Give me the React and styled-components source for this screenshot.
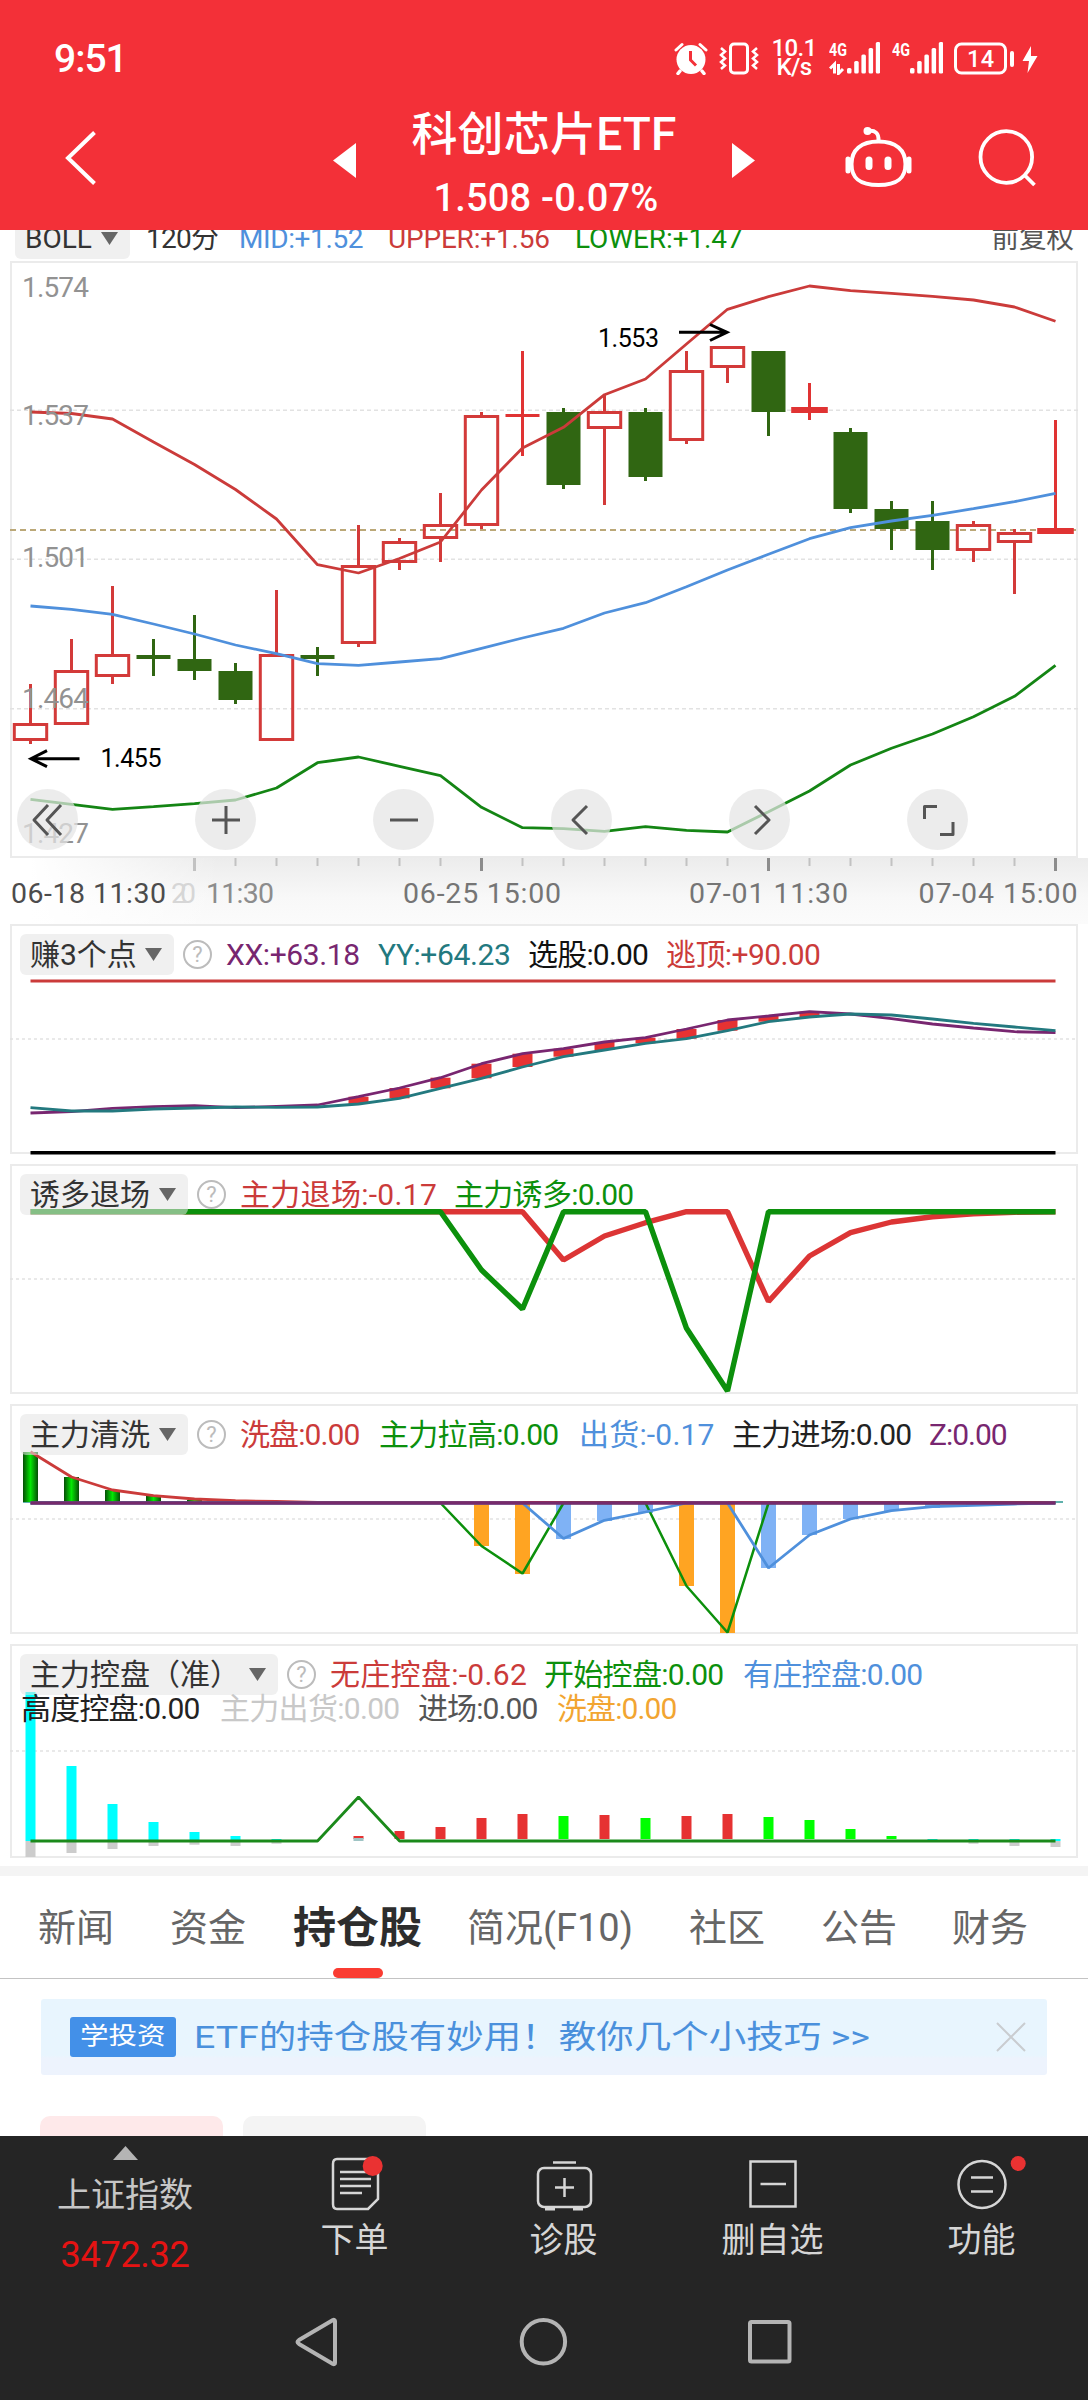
import styled, { createGlobalStyle } from 'styled-components';

const GlobalStyle = createGlobalStyle`
	* {
		box-sizing: border-box;
	}

	body {
		margin: 0;
		background: #fff;
		font-family: Roboto, 'Noto Sans CJK SC', sans-serif;
	}

	svg {
		display: block;
		flex: none;
	}

	svg text {
		font-family: Roboto, 'Noto Sans CJK SC', sans-serif;
	}
`;

const RED = '#cb3b3a';
const GREEN = '#0c900c';
const BLUE = '#4f90dc';
const PURPLE = '#782670';
const TEAL = '#23797f';
const BODY_GREEN = '#306612';

const Screen = styled.div`
	display: flex;
	flex-direction: column;
	width: 1088px;
	height: 2400px;
	background: #fff;
	overflow: hidden;
`;

/* ---------- header ---------- */

const Header = styled.header`
	display: flex;
	flex-direction: column;
	height: 230px;
	flex: none;
	background: #f33038;
	color: #fff;
	z-index: 2;
`;

const StatusBar = styled.div`
	display: flex;
	justify-content: space-between;
	height: 92px;
	padding: 25px 50px 0 54px;
`;

const Clock = styled.div`
	font-size: 39px;
	font-weight: 500;
	line-height: 68px;
	letter-spacing: -1px;
`;

const StatusIcons = styled.div`
	display: flex;
	align-items: center;
	height: 66px;
`;

const Speed = styled.div`
	display: flex;
	flex-direction: column;
	align-items: center;
	width: 44px;
	margin: 0 13px;
	font-size: 24px;
	font-weight: 500;
	line-height: 19px;
	letter-spacing: -0.6px;
`;

const TitleBar = styled.div`
	display: grid;
	grid-template-columns: 333px 23px 376px 23px 1fr;
	height: 138px;
`;

const BackCell = styled.div`
	padding: 38px 0 0 64px;
`;

const StepCell = styled.div`
	padding-top: 51px;
`;

const TitleCell = styled.div`
	display: flex;
	flex-direction: column;
	align-items: center;
	padding-top: 11px;
`;

const Title = styled.div`
	font-size: 46px;
	line-height: 62px;
	white-space: nowrap;
	font-weight: 500;
	letter-spacing: 0.2px;
`;

const Quote = styled.div`
	margin-top: 10px;
	padding-left: 4px;
	font-size: 38px;
	font-weight: 500;
	line-height: 46px;
	letter-spacing: 0.2px;
`;

const ActionCell = styled.div`
	display: flex;
	gap: 66px;
	padding: 34px 0 0 89px;
`;

/* ---------- charts ---------- */

const InfoRow = styled.div`
	display: flex;
	align-items: flex-end;
	height: 31px;
	flex: none;
	padding: 0 14px 2px 15px;
	overflow: hidden;
`;

const Pill = styled.div`
	display: flex;
	align-items: center;
	justify-content: space-between;
	flex: none;
	width: ${(p) => p.$w}px;
	height: 41px;
	margin-right: ${(p) => p.$mr || 0}px;
	padding: 0 12px 0 10px;
	border-radius: 6px;
	background: rgba(229, 229, 229, 0.56);
	color: #333;
	font-size: ${(p) => p.$size || 30}px;
	line-height: 41px;
	white-space: nowrap;
`;

const Label = styled.span`
	flex: none;
	width: ${(p) => (p.$w ? `${p.$w}px` : 'auto')};
	margin-left: ${(p) => (p.$end ? 'auto' : 0)};
	color: ${(p) => p.$c};
	font-size: ${(p) => p.$size || 30}px;
	line-height: 41px;
	letter-spacing: ${(p) => p.$ls || 0}px;
	white-space: nowrap;
`;

const Frame = styled.section`
	position: relative;
	flex: none;
	width: 1068px;
	height: ${(p) => p.$h}px;
	margin: 0 0 ${(p) => p.$gap || 0}px 10px;
	border: 2px solid #ebebeb;

	> svg {
		margin: -2px;
		overflow: visible;
	}
`;

const ZoomButtons = styled.div`
	position: absolute;
	left: 5px;
	top: 526px;
	display: flex;
	gap: 117px;
`;

const RoundButton = styled.div`
	display: flex;
	align-items: center;
	justify-content: center;
	width: 61px;
	height: 61px;
	border-radius: 50%;
	background: rgba(228, 228, 228, 0.72);
`;

const Axis = styled.div`
	height: 66px;
	flex: none;
	background: linear-gradient(90deg, #fff 30px, rgba(255, 255, 255, 0) 220px),
		linear-gradient(180deg, #ececec, #f8f8f8 60%, #fbfbfb);
`;

const Legend = styled.div`
	position: absolute;
	left: 8px;
	top: 8px;
	display: flex;
	align-items: center;
`;

const LegendWrap = styled.div`
	position: absolute;
	left: 9px;
	top: 42px;
	display: flex;
`;

const HelpIcon = styled.div`
	display: flex;
	align-items: center;
	justify-content: center;
	width: 29px;
	height: 29px;
	margin: 0 14px 0 9px;
	border: 2px solid #bcbcbc;
	border-radius: 50%;
	color: #bcbcbc;
	font-size: 22px;
	line-height: 25px;
`;

/* ---------- lower content ---------- */

const Divider = styled.div`
	height: 10px;
	flex: none;
	margin-top: 8px;
	background: #f4f4f4;
`;

const Tabs = styled.nav`
	display: flex;
	flex: none;
	height: 103px;
	padding-left: 38px;
	border-bottom: 1px solid #c3c3c3;
`;

const Tab = styled.div`
	position: relative;
	width: ${(p) => p.$w}px;
	color: ${(p) => (p.$active ? '#2d2d2d' : '#666')};
	font-size: ${(p) => (p.$active ? 43 : 38)}px;
	font-weight: ${(p) => (p.$active ? 700 : 400)};
	line-height: 105px;
	white-space: nowrap;

	&::after {
		content: '';
		display: ${(p) => (p.$active ? 'block' : 'none')};
		position: absolute;
		left: 40px;
		bottom: 0;
		width: 50px;
		height: 10px;
		border-radius: 5px;
		background: #fa3c32;
	}
`;

const Banner = styled.div`
	display: flex;
	align-items: center;
	flex: none;
	width: 1006px;
	height: 76px;
	margin: 20px 0 0 41px;
	padding: 0 21px 0 29px;
	border-radius: 3px;
	background: linear-gradient(180deg, #e8f5fe 74%, #edf3fd 78%);
`;

const Badge = styled.div`
	width: 106px;
	height: 40px;
	margin-right: 18px;
	border-radius: 3px;
	background: #4390e8;
	color: #fff;
	font-size: 24px;
	line-height: 38px;

	span {
		display: block;
		margin-left: 10px;
		width: 72px;
		transform: scaleX(1.19);
		transform-origin: left;
		white-space: nowrap;
	}
`;

const BannerText = styled.div`
	flex: 1;
	color: #4a90dc;
	font-size: 32px;
	line-height: 76px;
	white-space: nowrap;
	transform: scaleX(1.172);
	transform-origin: left;
`;

const Chips = styled.div`
	display: flex;
	gap: 20px;
	flex: none;
	height: 20px;
	margin: 41px 0 0 40px;
`;

const Chip = styled.div`
	width: 183px;
	border-radius: 10px 10px 0 0;
	background: ${(p) => p.$bg};
`;

/* ---------- bottom bars ---------- */

const BottomBar = styled.footer`
	display: grid;
	grid-template-columns: 250px repeat(4, 209px);
	flex: none;
	height: 154px;
	background: #252525;
`;

const IndexCell = styled.div`
	display: flex;
	flex-direction: column;
	align-items: center;
	padding-top: 10px;
	color: #c6c6c6;
	font-size: 34px;

	div {
		line-height: 44px;
		margin-top: 13px;
	}

	strong {
		margin-top: 16px;
		color: #e51313;
		font-size: 36px;
		font-weight: 400;
		line-height: 44px;
		letter-spacing: -0.3px;
	}
`;

const BarItem = styled.div`
	display: flex;
	flex-direction: column;
	align-items: center;
	padding-top: 18px;
	color: #d6d6d6;
	font-size: 34px;
	line-height: 44px;

	svg {
		overflow: visible;
		margin-bottom: 4px;
	}
`;

const SystemNav = styled.div`
	display: flex;
	flex: 1;
	align-items: flex-start;
	padding: 25px 0 0 293px;
	background: #252525;
`;

const NavIcon = styled.svg`
	width: 50px;
	height: 54px;
	margin-right: ${(p) => p.$mr || 0}px;
	fill: none;
	stroke: #b4b4b4;
	stroke-width: 4;
	stroke-linejoin: round;
`;

/* ---------- data ---------- */

// horizontal centre of the n-th bar; every pane shares this scale
const bx = (i) => 30.5 + i * 41;

// [kind, body top, body bottom, wick top, wick bottom]
const candles = [
	['up', 723, 741, 684, 744],
	['up', 670, 725, 639, 725],
	['up', 654, 677, 586, 684],
	['down', 655, 659, 639, 676],
	['down', 659, 671, 615, 680],
	['down', 671, 700, 663, 704],
	['up', 654, 741, 590, 741],
	['down', 655, 659, 647, 676],
	['up', 565, 644, 525, 647],
	['up', 541, 563, 538, 570],
	['up', 524, 539, 493, 562],
	['up', 415, 526, 412, 529],
	['flat', 414, 417, 351, 456],
	['down', 412, 485, 408, 489],
	['up', 411, 429, 395, 505],
	['down', 412, 477, 408, 481],
	['up', 370, 441, 351, 444],
	['up', 346, 368, 346, 383],
	['down', 351, 412, 351, 436],
	['flat', 407, 413, 383, 420],
	['down', 432, 509, 428, 513],
	['down', 509, 529, 501, 550],
	['down', 521, 550, 501, 570],
	['up', 524, 551, 521, 562],
	['up', 532, 543, 529, 594],
	['flat', 528, 534, 420, 534],
];

const upper = [
	412, 413.5, 419, 442, 464.5, 489.5, 519, 564.7, 573, 558.5, 542, 490, 448,
	427.3, 394.7, 379, 344, 309.3, 296.7, 286, 290.7, 293.3, 296.3, 300, 307, 321.3,
];
const mid = [
	606, 609.3, 614.3, 624, 634, 645, 653.7, 663.7, 665.3, 662, 658.7, 648.3, 638,
	628.3, 613, 602.7, 586.7, 570, 554.3, 538.7, 527.7, 521, 515.3, 508.7, 501.7, 493.3,
];
const lower = [
	799.3, 804.3, 809.3, 806.7, 803.7, 800, 788, 762.7, 757, 766.3, 775.7, 807.3,
	827.7, 828.7, 831.3, 826.7, 830.3, 832, 811.7, 791, 765, 748.3, 734, 716.7,
	696.3, 665.3,
];

const xx = [
	1113, 1111.7, 1108.3, 1106.7, 1105.7, 1107.7, 1106.3, 1105, 1096.7, 1088,
	1077.7, 1063.7, 1053.7, 1048.7, 1042, 1037.7, 1029, 1020, 1016, 1011.7, 1014,
	1018.7, 1024, 1028, 1031.7, 1032.7,
];
const yy = [
	1107.7, 1111, 1111, 1109, 1108, 1107, 1107.3, 1107, 1104, 1098.3, 1088.3,
	1078.3, 1067, 1056.7, 1050, 1043.3, 1038.7, 1030.7, 1021.7, 1017, 1014, 1015,
	1019, 1023.3, 1027, 1030.7,
];

// series that rest on a base line, with only the exceptions listed
const series = (base, points) =>
	Array.from({ length: 26 }, (_, i) => (i in points ? points[i] : base));

const exitRed = series(1211.7, {
	13: 1260, 14: 1236, 15: 1222.7, 18: 1301.5, 19: 1256, 20: 1232.7, 21: 1222,
	22: 1216.7, 23: 1213.7, 24: 1212.2,
});
const lureGreen = series(1211.7, { 11: 1270, 12: 1309, 16: 1328.3, 17: 1391 });

const washRed = series(1502.5, {
	0: 1451.7, 1: 1477, 2: 1490, 3: 1495.7, 4: 1499, 5: 1500.7, 6: 1501.5,
});
const pullGreen = series(1503, { 11: 1546, 12: 1573.5, 16: 1586, 17: 1632.5 });
const sellBlue = series(1503, {
	13: 1538.5, 14: 1520.3, 15: 1512, 18: 1568, 19: 1535, 20: 1519, 21: 1510.7,
	22: 1506.7, 23: 1505.3, 24: 1504,
});

const washBars = { 0: 1452, 1: 1477, 2: 1490, 3: 1496, 4: 1500 };
const orangeBars = { 11: 1546, 12: 1574, 16: 1586, 17: 1633 };
const blueBars = {
	13: 1539, 14: 1521, 15: 1513, 18: 1568, 19: 1535, 20: 1519, 21: 1511,
	22: 1508, 23: 1506,
};

const cyanBars = {
	0: 1692, 1: 1766, 2: 1804, 3: 1822, 4: 1832, 5: 1836, 6: 1839, 22: 1839,
	23: 1839, 24: 1839, 25: 1839,
};
const greyBars = {
	0: 1857, 1: 1853, 2: 1849, 3: 1846, 4: 1844.7, 5: 1846, 6: 1843.7, 23: 1843.7,
	24: 1846, 25: 1847,
};
const redBars = {
	8: 1836, 9: 1831, 10: 1827, 11: 1818, 12: 1814, 14: 1815, 16: 1816, 17: 1814,
};
const limeBars = { 13: 1816, 15: 1818, 18: 1817, 19: 1820, 20: 1829, 21: 1836 };

/* ---------- chart parts ---------- */

const Line = ({ data, color, width = 2.8 }) => (
	<polyline
		points={data.map((y, i) => `${bx(i)},${y}`).join(' ')}
		fill="none"
		stroke={color}
		strokeWidth={width}
		strokeLinejoin="bevel"
	/>
);

const Bars = ({ data, base, width, color }) =>
	Object.entries(data).map(([i, y]) => (
		<rect
			key={i}
			x={bx(+i) - width / 2}
			y={Math.min(y, base)}
			width={width}
			height={Math.abs(base - y)}
			fill={color}
		/>
	));

const Candle = ({ i, kind, top, bottom, high, low }) => {
	const x = bx(i);
	const color = kind === 'down' ? BODY_GREEN : kind === 'up' ? '#d33a39' : '#e03333';
	if (kind === 'up') {
		return (
			<g stroke={color} strokeWidth="3" fill="none">
				<path d={`M${x} ${high}V${top}M${x} ${bottom}V${low}`} />
				<rect x={x - 16.2} y={top + 1.5} width="32.4" height={bottom - top - 3} />
			</g>
		);
	}
	const half = kind === 'flat' && bottom - top > 4 ? 18.3 : 17;
	return (
		<g fill={color}>
			<rect x={x - 1.5} y={high} width="3" height={low - high} />
			<rect x={x - half} y={top} width={half * 2} height={bottom - top} />
		</g>
	);
};

const GridLine = ({ y, dash = '4 3' }) => (
	<path d={`M10 ${y}H1078`} stroke="#e2e2e2" strokeWidth="1.4" strokeDasharray={dash} />
);

const PRICES = [
	['1.574', 296.7],
	['1.537', 424.5],
	['1.501', 566.7],
	['1.464', 707.7],
	['1.427', 842.7],
];

const TriangleDown = () => (
	<svg width="17" height="13" viewBox="0 0 17 13">
		<path d="M0 0H17L8.5 13Z" fill="#666" />
	</svg>
);

const PriceChart = () => (
	<Frame $h={597}>
		<svg width="1068" height="597" viewBox="10 261 1068 597">
			<GridLine y={410.3} />
			<GridLine y={559.3} />
			<GridLine y={708.7} />
			<path d="M10 530H1078" stroke="#bba878" strokeWidth="2" strokeDasharray="6 4" />
			{candles.map(([kind, top, bottom, high, low], i) => (
				<Candle key={i} {...{ i, kind, top, bottom, high, low }} />
			))}
			<Line data={upper} color={RED} />
			<Line data={mid} color={BLUE} />
			<Line data={lower} color="#148514" />
			<g fontSize="28" fill="#929292">
				{PRICES.map(([label, y]) => (
					<text key={label} x="22" y={y} textLength="67">
						{label}
					</text>
				))}
			</g>
			<g stroke="#000" strokeWidth="3" fill="none">
				<path d="M679 332.3H727M710 324.5L727 332.3L710 340.5" />
				<path d="M79.5 758.7H32M47 750.7L31 758.7L47 766.7" />
			</g>
			<g fontSize="25" fill="#000">
				<text x="598" y="346.7" textLength="61">
					1.553
				</text>
				<text x="100.5" y="767" textLength="61">
					1.455
				</text>
			</g>
		</svg>
		<ZoomButtons>
			{[
				'M31 16L17 31L31 46M44 16L30 31L44 46',
				'M17 31H45M31 17V45',
				'M17 31H45',
				'M36 17L22 31L36 45',
				'M26 17L40 31L26 45',
				'M17.5 30V17.5H30M46 33V45.5H33',
			].map((d) => (
				<RoundButton key={d}>
					<svg width="61" height="61" viewBox="0 0 61 61">
						<path d={d} fill="none" stroke="#555" strokeWidth="3" strokeLinejoin="round" />
					</svg>
				</RoundButton>
			))}
		</ZoomButtons>
	</Frame>
);

const TimeAxis = () => (
	<Axis>
		<svg width="1088" height="66" viewBox="0 858 1088 66">
			{Array.from({ length: 22 }, (_, n) => n + 4).map((i) => {
				const major = [4, 11, 18, 25].includes(i);
				return (
					<rect
						key={i}
						x={bx(i) - (major ? 1.5 : 1)}
						y="858"
						width={major ? 3 : 2}
						height={major ? 13 : 8}
						fill={major && i > 4 ? '#8c8c8c' : '#c2c2c2'}
					/>
				);
			})}
			<g fontSize="28.5" fill="#757575">
				<text x="171" y="902.7" fill="#d6d6d6" textLength="25">
					20
				</text>
				<text x="206" y="902.7" fill="#8c8c8c" textLength="68">
					11:30
				</text>
				<text x="403" y="902.7" textLength="158">
					06-25 15:00
				</text>
				<text x="689" y="902.7" textLength="159">
					07-01 11:30
				</text>
				<text x="918.5" y="902.7" textLength="159">
					07-04 15:00
				</text>
				<text x="11" y="902.7" fill="#4c4c4c" textLength="155">
					06-18 11:30
				</text>
			</g>
		</svg>
	</Axis>
);

const LegendRow = ({ name, pill, items }) => (
	<Legend>
		<Pill $w={pill}>
			{name}
			<TriangleDown />
		</Pill>
		<HelpIcon>?</HelpIcon>
		{items.map(([text, color, w, ls]) => (
			<Label key={text} $c={color} $w={w} $ls={ls}>
				{text}
			</Label>
		))}
	</Legend>
);

const ThreePointPane = () => (
	<Frame $h={230} $gap={10}>
		<svg width="1068" height="230" viewBox="10 924 1068 230">
			<GridLine y={1039} dash="3 3" />
			{xx.map((y, i) =>
				i > 7 && i < 20 ? (
					<rect key={i} x={bx(i) - 10} y={y} width="20" height={yy[i] - y} fill="#e63232" />
				) : null
			)}
			<Line data={xx} color={PURPLE} />
			<Line data={yy} color={TEAL} />
			<path d="M30.5 981H1055.5" stroke={RED} strokeWidth="3" />
			<path d="M30.5 1152.7H1055.5" stroke="#000" strokeWidth="3.5" />
		</svg>
		<LegendRow
			name="赚3个点"
			pill={154}
			items={[
				['XX:+63.18', PURPLE, 152, -0.4],
				['YY:+64.23', TEAL, 150, -0.4],
				['选股:0.00', '#111', 138, -0.8],
				['逃顶:+90.00', RED, 160, -0.6],
			]}
		/>
	</Frame>
);

const ExitPane = () => (
	<Frame $h={230} $gap={10}>
		<svg width="1068" height="230" viewBox="10 1164 1068 230">
			<GridLine y={1279} dash="3 3" />
			<Line data={exitRed} color="#dc3535" width={5.4} />
			<Line data={lureGreen} color={GREEN} width={5.4} />
		</svg>
		<LegendRow
			name="诱多退场"
			pill={168}
			items={[
				['主力退场:-0.17', RED, 214, 0.3],
				['主力诱多:0.00', GREEN, 200, -0.7],
			]}
		/>
	</Frame>
);

const WashPane = () => (
	<Frame $h={230} $gap={10}>
		<svg width="1068" height="230" viewBox="10 1404 1068 230">
			<defs>
				<linearGradient id="wash">
					<stop offset="0" stopColor="#064d06" />
					<stop offset="0.5" stopColor="#04e804" />
					<stop offset="1" stopColor="#064d06" />
				</linearGradient>
			</defs>
			<GridLine y={1519} dash="3 3" />
			<path d="M23 1502H1063" stroke="#5fb0ac" strokeWidth="2" />
			<Bars data={washBars} base={1502} width={15} color="url(#wash)" />
			<Bars data={orangeBars} base={1503} width={15} color="#ffa422" />
			<Bars data={blueBars} base={1503} width={15} color="#7fb2f5" />
			<Line data={washRed} color={RED} />
			<Line data={pullGreen} color={GREEN} width={2.5} />
			<Line data={sellBlue} color={BLUE} />
			<path d="M30.5 1503H1055.5" stroke="#762a6c" strokeWidth="3.6" />
		</svg>
		<LegendRow
			name="主力清洗"
			pill={168}
			items={[
				['洗盘:0.00', RED, 139, -0.9],
				['主力拉高:0.00', GREEN, 200, -0.7],
				['出货:-0.17', BLUE, 153, 0.2],
				['主力进场:0.00', '#222', 197, -0.7],
				['Z:0.00', PURPLE, 80, -1],
			]}
		/>
	</Frame>
);

const ControlPane = () => (
	<Frame $h={214}>
		<svg width="1068" height="214" viewBox="10 1644 1068 214">
			<GridLine y={1751} dash="3 3" />
			<Bars data={greyBars} base={1841} width={10} color="#ccc" />
			<Bars data={cyanBars} base={1841} width={10} color="#00ffff" />
			<Bars data={redBars} base={1839} width={10} color="#e63232" />
			<Bars data={limeBars} base={1839} width={10} color="#00ff00" />
			<rect x={bx(8) - 5} y="1838" width="10" height="3" fill="#9fc4c4" />
			<Line data={series(1841, { 8: 1797 })} color="#1b8a1b" />
		</svg>
		<LegendRow
			name="主力控盘（准）"
			pill={258}
			items={[
				['无庄控盘:-0.62', RED, 214, 0.3],
				['开始控盘:0.00', GREEN, 199, -0.7],
				['有庄控盘:0.00', BLUE, 190, -0.7],
			]}
		/>
		<LegendWrap>
			<Label $c="#222" $w={199} $ls={-0.8}>高度控盘:0.00</Label>
			<Label $c="#c8c8c8" $w={198} $ls={-0.7}>主力出货:0.00</Label>
			<Label $c="#555" $w={139} $ls={-0.9}>进场:0.00</Label>
			<Label $c="#f2a531" $w={130} $ls={-0.9}>洗盘:0.00</Label>
		</LegendWrap>
	</Frame>
);

/* ---------- icons ---------- */

const AlarmIcon = () => (
	<svg width="34" height="33" viewBox="0 0 34 33">
		<circle cx="17" cy="17.5" r="14.5" fill="#fff" />
		<path d="M2 8L8 2.5M32 8L26 2.5" stroke="#fff" strokeWidth="3" strokeLinecap="round" />
		<path d="M6 29L4 31.5M28 29L30 31.5" stroke="#fff" strokeWidth="3.5" strokeLinecap="round" />
		<path d="M16.5 9V18L22 23.5" stroke="#f33038" strokeWidth="3" fill="none" />
	</svg>
);

const VibrateIcon = () => (
	<svg width="40" height="33" viewBox="0 0 40 33" fill="none" stroke="#fff" strokeWidth="3">
		<rect x="11.5" y="2" width="17" height="29" rx="3.5" />
		<path d="M2 6L6 9.5L2 13L6 16.5L2 20L6 23.5L2 27" strokeWidth="2.5" />
		<path d="M38 6L34 9.5L38 13L34 16.5L38 20L34 23.5L38 27" strokeWidth="2.5" />
	</svg>
);

const SignalIcon = ({ arrows }) => (
	<svg width="51" height="33" viewBox="0 0 51 33" fill="#fff">
		<text x="0" y="13.5" fontSize="18.5" fontWeight="700" textLength="18" lengthAdjust="spacingAndGlyphs">
			4G
		</text>
		{[26, 19, 12.5, 6, 0].map((y, n) => (
			<rect key={y} x={18 + n * 7.2} y={y} width="4.5" height={31.5 - y} rx="1.5" />
		))}
		{arrows && (
			<path
				d="M1 26.5L5.5 22V31.5M9.5 22V31.5L14 27"
				fill="none"
				stroke="#fff"
				strokeWidth="3"
			/>
		)}
	</svg>
);

const BatteryIcon = () => (
	<svg width="84" height="33" viewBox="0 0 84 33">
		<rect x="1.5" y="2" width="50" height="29" rx="6" fill="none" stroke="#fff" strokeWidth="3" />
		<rect x="56" y="9" width="4" height="16" rx="2" fill="#fff" />
		<text x="13" y="25" fontSize="23.5" fontWeight="500" fill="#fff" textLength="27">
			14
		</text>
		<path d="M77 4L68.5 19H75L73.5 31L83.5 14H77Z" fill="#fff" />
	</svg>
);

const RobotIcon = () => (
	<svg width="68" height="64" viewBox="844 128 68 64" fill="none" stroke="#fff" strokeWidth="4">
		<path d="M878.5 143.5C896 143.5 905.5 152 905.5 166C905.5 180 898 187 878.5 187S851.5 180 851.5 166C851.5 152 861 143.5 878.5 143.5Z" />
		<path d="M848 161V173M909 161V173" strokeWidth="5" strokeLinecap="round" />
		<path d="M869 162V168.5M888 162V168.5" strokeWidth="7" strokeLinecap="round" />
		<path d="M868 133C875 132 879 135 878.5 143" />
		<circle cx="867.5" cy="133" r="4" fill="#fff" stroke="none" />
	</svg>
);

const SearchIcon = () => (
	<svg width="60" height="64" viewBox="978 128 60 64" fill="none" stroke="#fff" strokeWidth="3.8">
		<circle cx="1006.3" cy="159" r="25.8" />
		<path d="M1024 176.5L1034.5 187" />
	</svg>
);

const OrderIcon = () => (
	<svg width="50" height="60" viewBox="330 2154 50 60" fill="none" stroke="#d6d6d6" strokeWidth="2.5">
		<path d="M337 2159H373C376 2159 378 2161 378 2164V2199L368 2209H337C334 2209 333 2207 333 2204V2164C333 2161 334 2159 337 2159Z" />
		<path d="M340 2172H371M340 2179H371M340 2186H371M340 2193H362" />
		<circle cx="372.7" cy="2166" r="10" fill="#ea3232" stroke="none" />
	</svg>
);

const DiagnoseIcon = () => (
	<svg width="58" height="60" viewBox="535 2154 58 60" fill="none" stroke="#d6d6d6" strokeWidth="2.5">
		<rect x="538" y="2168" width="53" height="39" rx="6" />
		<path d="M553 2162.5H576M555 2187.5H574M564.5 2178V2197" />
		<path d="M545 2209H555M573 2209H583" strokeWidth="3" />
	</svg>
);

const RemoveIcon = () => (
	<svg width="50" height="60" viewBox="748 2154 50 60" fill="none" stroke="#d6d6d6" strokeWidth="2.5">
		<rect x="750.5" y="2161.5" width="45" height="45" />
		<path d="M760.5 2184H786" />
	</svg>
);

const FunctionIcon = () => (
	<svg width="50" height="60" viewBox="957.5 2154 50 60" fill="none" stroke="#d6d6d6" strokeWidth="2.5">
		<circle cx="982.5" cy="2184.5" r="23.5" />
		<path d="M971.5 2177.5H993.5M971.5 2191.5H993.5" />
		<circle cx="1018.7" cy="2163.5" r="7.5" fill="#ea3232" stroke="none" />
	</svg>
);

const StatusGap = styled.i`
	width: ${(p) => p.$w}px;
`;

const App = () => {
	return (
		<>
			<GlobalStyle />
			<Screen>
				<Header>
					<StatusBar>
						<Clock>9:51</Clock>
						<StatusIcons>
							<AlarmIcon />
							<StatusGap $w={11} />
							<VibrateIcon />
							<Speed>
								<span>10.1</span>
								<span>K/s</span>
							</Speed>
							<SignalIcon arrows />
							<StatusGap $w={12} />
							<SignalIcon />
							<StatusGap $w={11} />
							<BatteryIcon />
						</StatusIcons>
					</StatusBar>
					<TitleBar>
						<BackCell>
							<svg width="34" height="56" viewBox="64 130 34 56">
								<path d="M94.5 132.5L68 158L94.5 183.5" fill="none" stroke="#fff" strokeWidth="4" />
							</svg>
						</BackCell>
						<StepCell>
							<svg width="23" height="35" viewBox="0 0 23 35">
								<path d="M23 0V35L0 17.5Z" fill="#fff" />
							</svg>
						</StepCell>
						<TitleCell>
							<Title>科创芯片ETF</Title>
							<Quote>1.508 -0.07%</Quote>
						</TitleCell>
						<StepCell>
							<svg width="23" height="35" viewBox="0 0 23 35">
								<path d="M0 0V35L23 17.5Z" fill="#fff" />
							</svg>
						</StepCell>
						<ActionCell>
							<RobotIcon />
							<SearchIcon />
						</ActionCell>
					</TitleBar>
				</Header>

				<InfoRow>
					<Pill $w={115} $mr={16} $size={28}>
						BOLL
						<TriangleDown />
					</Pill>
					<Label $c="#333" $w={93} $size={28} $ls={-0.7}>120分</Label>
					<Label $c={BLUE} $w={149} $size={28} $ls={-0.4}>MID:+1.52</Label>
					<Label $c={RED} $w={187} $size={28} $ls={-0.2}>UPPER:+1.56</Label>
					<Label $c={GREEN} $size={28} $ls={-0.1}>LOWER:+1.47</Label>
					<Label $c="#555" $size={27.5} $end>前复权</Label>
				</InfoRow>
				<PriceChart />
				<TimeAxis />
				<ThreePointPane />
				<ExitPane />
				<WashPane />
				<ControlPane />

				<Divider />
				<Tabs>
					<Tab $w={132}>新闻</Tab>
					<Tab $w={123}>资金</Tab>
					<Tab $w={174} $active>
						持仓股
					</Tab>
					<Tab $w={222}>简况(F10)</Tab>
					<Tab $w={132}>社区</Tab>
					<Tab $w={131}>公告</Tab>
					<Tab $w={90}>财务</Tab>
				</Tabs>
				<Banner>
					<Badge>
						<span>学投资</span>
					</Badge>
					<BannerText>ETF的持仓股有妙用！教你几个小技巧 &gt;&gt;</BannerText>
					<svg width="30" height="30" viewBox="0 0 30 30">
						<path d="M1 1L29 29M29 1L1 29" stroke="#c9ccd0" strokeWidth="2" />
					</svg>
				</Banner>
				<Chips>
					<Chip $bg="#fee9ea" />
					<Chip $bg="#f4f4f4" />
				</Chips>

				<BottomBar>
					<IndexCell>
						<svg width="25" height="14" viewBox="0 0 25 14">
							<path d="M12.5 0L25 14H0Z" fill="#b4b4b4" />
						</svg>
						<div>上证指数</div>
						<strong>3472.32</strong>
					</IndexCell>
					<BarItem>
						<OrderIcon />
						下单
					</BarItem>
					<BarItem>
						<DiagnoseIcon />
						诊股
					</BarItem>
					<BarItem>
						<RemoveIcon />
						删自选
					</BarItem>
					<BarItem>
						<FunctionIcon />
						功能
					</BarItem>
				</BottomBar>
				<SystemNav>
					<NavIcon viewBox="293 2315 50 54" $mr={175}>
						<path d="M335 2321V2363C335 2364 334 2364.5 333 2364L299 2344C297 2342.5 297 2341.5 299 2340L333 2320C334 2319.5 335 2320 335 2321Z" />
					</NavIcon>
					<NavIcon viewBox="518 2315 50 54" $mr={177}>
						<circle cx="543.4" cy="2341.7" r="21.7" />
					</NavIcon>
					<NavIcon viewBox="745 2315 50 54">
						<rect x="750" y="2322" width="39.5" height="39.5" rx="1.5" />
					</NavIcon>
				</SystemNav>
			</Screen>
		</>
	);
};

export default App;
